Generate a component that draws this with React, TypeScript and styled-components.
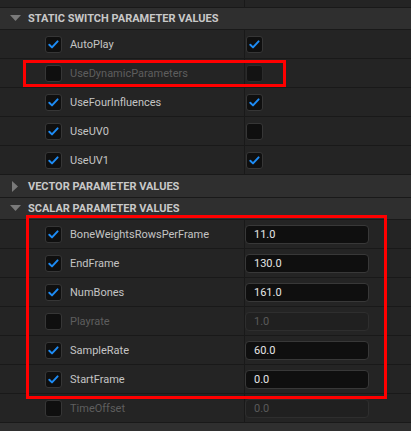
import styled, { createGlobalStyle } from 'styled-components';

const Global = createGlobalStyle`
  html, body {
    margin: 0;
    padding: 0;
    background: #242424;
    font-family: Roboto, "Noto Sans", "Liberation Sans", sans-serif;
  }
`;

const Panel = styled.div`
  position: relative;
  width: 411px;
  height: 431px;
  overflow: hidden;
  background: #242424;
`;

const Row = styled.div<{ h?: number }>`
  display: flex;
  height: ${p => p.h ?? 29}px;
  box-sizing: border-box;
  border-bottom: 1px solid #191919;
  background: #242424;
`;

const NameCell = styled.div`
  width: 245px;
  box-sizing: border-box;
  border-right: 1px solid #191919;
  display: flex;
  align-items: center;
  padding-left: 45px;
  gap: 8px;
`;

const ValueCell = styled.div`
  flex: 1;
  display: flex;
  align-items: center;
`;

const Label = styled.span<{ disabled?: boolean }>`
  font-size: 11px;
  color: ${p => (p.disabled ? '#5e5e5e' : '#c4c4c4')};
  white-space: nowrap;
`;

const Header = styled.div<{ h?: number }>`
  display: flex;
  align-items: center;
  height: ${p => p.h ?? 22}px;
  box-sizing: border-box;
  border-bottom: 1px solid #191919;
  background: #2f2f2f;
  padding-left: 9px;
  gap: 7px;
`;

const HeaderTitle = styled.span`
  font-size: 11px;
  font-weight: 700;
  color: #c8c8c8;
`;

const Arrow = styled.span`
  width: 12px;
  display: flex;
  justify-content: center;
`;

const Box = styled.div<{ disabled?: boolean; inset?: number }>`
  width: 17px;
  height: 17px;
  box-sizing: border-box;
  margin-left: ${p => p.inset ?? 0}px;
  border-radius: 3px;
  border: 1px solid ${p => (p.disabled ? '#2b2b2b' : '#363636')};
  background: ${p => (p.disabled ? '#131313' : '#0f0f0f')};
  display: flex;
  align-items: center;
  justify-content: center;
  flex-shrink: 0;
`;

const NumInput = styled.div<{ disabled?: boolean }>`
  width: 124px;
  height: 19px;
  box-sizing: border-box;
  border-radius: 4px;
  border: 1px solid ${p => (p.disabled ? '#2e2e2e' : '#383838')};
  background: ${p => (p.disabled ? '#202020' : '#0f0f0f')};
  color: ${p => (p.disabled ? '#5a5a5a' : '#e6e6e6')};
  font-size: 11px;
  padding-left: 8px;
  display: flex;
  align-items: center;
`;

const Highlight = styled.div<{ x: number; y: number; w: number; h: number }>`
  position: absolute;
  left: ${p => p.x}px;
  top: ${p => p.y}px;
  width: ${p => p.w}px;
  height: ${p => p.h}px;
  box-sizing: border-box;
  border: 3px solid #ff0000;
  pointer-events: none;
`;

const Check = () => (
  <svg width="13" height="13" viewBox="0 0 13 13">
    <path d="M2.3 6.8 L5 9.4 L10.6 3.4" fill="none" stroke="#1e8cf5" strokeWidth="2" strokeLinecap="round" strokeLinejoin="round" />
  </svg>
);

const CheckBox = ({ on, disabled, inset }: { on?: boolean; disabled?: boolean; inset?: number }) => (
  <Box disabled={disabled} inset={inset}>{on && <Check />}</Box>
);

const Tri = ({ open }: { open: boolean }) => (
  <Arrow>
    {open ? (
      <svg width="11" height="7" viewBox="0 0 11 7"><path d="M0 0 H11 L5.5 6 Z" fill="#7a7a7a" /></svg>
    ) : (
      <svg width="6" height="11" viewBox="0 0 6 11"><path d="M0 0 L6 5.5 L0 11 Z" fill="#7a7a7a" /></svg>
    )}
  </Arrow>
);

const Section = ({ title, open, h }: { title?: string; open: boolean; h?: number }) => (
  <Header h={h}>
    {title && <Tri open={open} />}
    {title && <HeaderTitle>{title}</HeaderTitle>}
  </Header>
);

const SWITCHES = [
  { name: 'AutoPlay', on: true, value: true },
  { name: 'UseDynamicParameters', on: false, value: false },
  { name: 'UseFourInfluences', on: true, value: true },
  { name: 'UseUV0', on: true, value: false },
  { name: 'UseUV1', on: true, value: true },
];

const SCALARS = [
  { name: 'BoneWeightsRowsPerFrame', on: true, value: '11.0' },
  { name: 'EndFrame', on: true, value: '130.0' },
  { name: 'NumBones', on: true, value: '161.0' },
  { name: 'Playrate', on: false, value: '1.0' },
  { name: 'SampleRate', on: true, value: '60.0' },
  { name: 'StartFrame', on: true, value: '0.0' },
  { name: 'TimeOffset', on: false, value: '0.0' },
];

export default function App() {
  return (
    <Panel>
      <Global />
      <Row h={8}>
        <NameCell />
        <ValueCell />
      </Row>
      <Section title="STATIC SWITCH PARAMETER VALUES" open />
      {SWITCHES.map(s => (
        <Row key={s.name}>
          <NameCell>
            <CheckBox on={s.on} />
            <Label disabled={!s.on}>{s.name}</Label>
          </NameCell>
          <ValueCell>
            <CheckBox on={s.value} disabled={!s.on} inset={1} />
          </ValueCell>
        </Row>
      ))}
      <Section title="VECTOR PARAMETER VALUES" open={false} h={23} />
      <Section title="SCALAR PARAMETER VALUES" open />
      {SCALARS.map(s => (
        <Row key={s.name}>
          <NameCell>
            <CheckBox on={s.on} />
            <Label disabled={!s.on}>{s.name}</Label>
          </NameCell>
          <ValueCell>
            <NumInput disabled={!s.on}>{s.value}</NumInput>
          </ValueCell>
        </Row>
      ))}
      <Section open={false} />

      <Highlight x={23} y={60} w={263} h={27} />
      <Highlight x={26} y={215} w={361} h={184} />
    </Panel>
  );
}
